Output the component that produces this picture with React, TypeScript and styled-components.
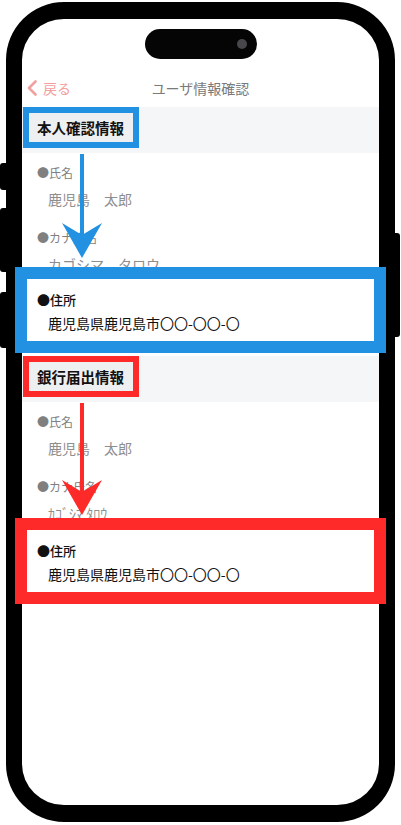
import React from 'react'
import styled, { createGlobalStyle } from 'styled-components'

const BLUE = '#2391e2'
const RED = '#fe2a2a'

type Person = {
  name: string
  kana: string
  address: string
}

const SECTIONS: { title: string; color: string; person: Person; pull: number; arrow: number }[] = [
  {
    title: '本人確認情報',
    color: BLUE,
    person: { name: '鹿児島　太郎', kana: 'カゴシマ　タロウ', address: '鹿児島県鹿児島市〇〇-〇〇-〇' },
    pull: 16,
    arrow: 104,
  },
  {
    title: '銀行届出情報',
    color: RED,
    person: { name: '鹿児島　太郎', kana: 'ｶｺﾞｼﾏ ﾀﾛｳ', address: '鹿児島県鹿児島市〇〇-〇〇-〇' },
    pull: 14,
    arrow: 112,
  },
]

const Arrow = ({ color, length }: { color: string; length: number }) => {
  const wing = length - 35
  const notch = length - 23
  return (
    <ArrowSvg width={40} height={length + 1} viewBox={`0 0 40 ${length + 1}`}>
      <rect x={18} y={0} width={4} height={notch} fill={color} />
      <polygon points={`0,${wing} 20,${length} 40,${wing} 20,${notch}`} fill={color} />
    </ArrowSvg>
  )
}

export const App = () => {
  return (
    <Stage>
      <GlobalStyle />
      <SideButton $side="left" $top={163} $height={27} />
      <SideButton $side="left" $top={208} $height={64} />
      <SideButton $side="left" $top={292} $height={56} />
      <SideButton $side="right" $top={233} $height={104} />
      <Phone>
        <Island>
          <Camera />
        </Island>
        <NavBar>
          <BackButton>
            <svg width="10" height="16" viewBox="0 0 10 16">
              <polyline
                points="8.5,1.5 2,8 8.5,14.5"
                fill="none"
                stroke="#f2a0a0"
                strokeWidth="2.6"
                strokeLinecap="round"
                strokeLinejoin="round"
              />
            </svg>
            戻る
          </BackButton>
          <Title>ユーザ情報確認</Title>
          <span />
        </NavBar>
        {SECTIONS.map((section, i) => (
          <Section key={section.title} $top={i === 0 ? 1 : 3}>
            <Band>
              <Tag $color={section.color}>{section.title}</Tag>
            </Band>
            <Field>
              <Label>●氏名</Label>
              <Value>{section.person.name}</Value>
            </Field>
            <Field>
              <Label>●カナ氏名</Label>
              <Value>{section.person.kana}</Value>
            </Field>
            <Highlight $color={section.color} $pull={section.pull}>
              <Label $strong>●住所</Label>
              <Value $strong>{section.person.address}</Value>
            </Highlight>
            <Arrow color={section.color} length={section.arrow} />
          </Section>
        ))}
      </Phone>
    </Stage>
  )
}

export default App

const GlobalStyle = createGlobalStyle`
  html, body {
    margin: 0;
    padding: 0;
    background: #fff;
  }
  body {
    font-family: 'Noto Sans CJK JP', 'Noto Sans', sans-serif;
  }
`

const Stage = styled.div`
  position: relative;
  width: 401px;
  height: 825px;
  padding: 2px 0 0 6px;
  box-sizing: border-box;
  overflow: hidden;
`

const SideButton = styled.div<{ $side: 'left' | 'right'; $top: number; $height: number }>`
  position: absolute;
  top: ${(p) => p.$top}px;
  ${(p) => (p.$side === 'left' ? 'left: 0;' : 'right: 1px;')}
  width: 8px;
  height: ${(p) => p.$height}px;
  background: #000;
  border-radius: ${(p) => (p.$side === 'left' ? '3px 0 0 3px' : '0 3px 3px 0')};
`

const Phone = styled.div`
  position: relative;
  width: 389px;
  height: 820px;
  box-sizing: border-box;
  border: 16px solid #000;
  border-top-width: 17px;
  border-bottom-width: 17px;
  border-radius: 58px;
  background: #fff;
  display: flex;
  flex-direction: column;
`

const Island = styled.div`
  align-self: center;
  margin-top: 10px;
  width: 112px;
  height: 30px;
  border-radius: 15px;
  background: #050505;
  display: flex;
  align-items: center;
  justify-content: flex-end;
  padding-right: 10px;
  box-sizing: border-box;
`

const Camera = styled.div`
  width: 10px;
  height: 10px;
  border-radius: 50%;
  background: #48474c;
`

const NavBar = styled.div`
  display: grid;
  grid-template-columns: 1fr auto 1fr;
  align-items: center;
  height: 36px;
  margin-top: 11px;
  padding: 0 5px;
`

const BackButton = styled.div`
  display: flex;
  align-items: center;
  gap: 6px;
  color: #f2a0a0;
  font-size: 14px;
`

const Title = styled.div`
  color: #7a7a7a;
  font-size: 14px;
`

const Section = styled.section<{ $top: number }>`
  position: relative;
  margin-top: ${(p) => p.$top}px;
`

const Band = styled.div`
  height: 46px;
  background: #f5f6f7;
  padding-left: 1px;
  display: flex;
  align-items: flex-start;
`

const Tag = styled.div<{ $color: string }>`
  box-sizing: border-box;
  width: 116px;
  height: 41px;
  border: 6px solid ${(p) => p.$color};
  background: #eeeff1;
  padding-left: 8px;
  display: flex;
  align-items: center;
  color: #111;
  font-size: 14.5px;
  font-weight: 600;
`

const Field = styled.div`
  padding: 10px 0 8px 15px;
`

const Label = styled.div<{ $strong?: boolean }>`
  font-size: ${(p) => (p.$strong ? 13 : 12)}px;
  line-height: 20px;
  color: ${(p) => (p.$strong ? '#111' : '#808080')};
  font-weight: ${(p) => (p.$strong ? 500 : 400)};
`

const Value = styled.div<{ $strong?: boolean }>`
  font-size: 14px;
  line-height: 22px;
  margin-top: ${(p) => (p.$strong ? 2 : 5)}px;
  padding-left: 11px;
  color: ${(p) => (p.$strong ? '#111' : '#8e8e8e')};
  white-space: pre;
`

const Highlight = styled.div<{ $color: string; $pull: number }>`
  position: relative;
  z-index: 1;
  margin: -${(p) => p.$pull}px -7px 0;
  border: 12px solid ${(p) => p.$color};
  background: #fff;
  padding: 11px 0 7px 10px;
`

const ArrowSvg = styled.svg`
  position: absolute;
  left: 40px;
  top: 47px;
  z-index: 2;
  overflow: visible;
`
